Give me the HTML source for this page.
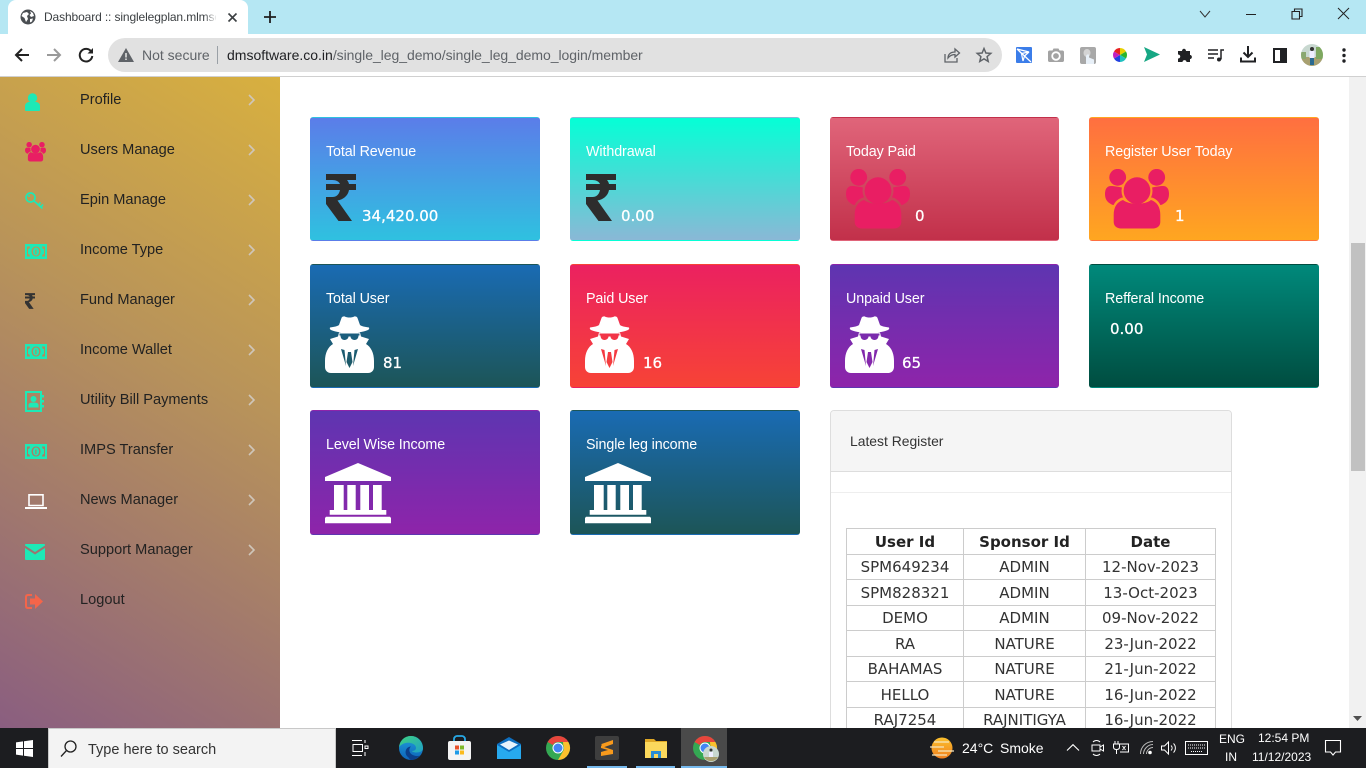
<!DOCTYPE html>
<html lang="en"><head><meta charset="utf-8"><title>Dashboard</title>
<style>
html,body{margin:0;padding:0;width:1366px;height:768px;overflow:hidden;background:#fff;font-family:"Liberation Sans",sans-serif}
.a{position:absolute;white-space:nowrap}
svg{position:absolute;overflow:visible}
.side{left:0;top:77px;width:280px;height:651px;background:linear-gradient(212deg,#d8b03f 0%,#b8935a 42%,#8a5e80 100%)}
.m{left:80px;font-size:14.6px;line-height:20px;color:#222}
.card{position:absolute;box-sizing:border-box;border:1px solid transparent;border-radius:3px;color:#fff}
.t{position:absolute;left:15px;top:24px;font-size:14.3px;line-height:20px;white-space:nowrap;letter-spacing:-.1px}
.n{position:absolute;font:15px/20px "DejaVu Sans",sans-serif;color:#fff;white-space:nowrap;-webkit-text-stroke:.3px #fff}
.g1{background:linear-gradient(#5b7de9,#2fc1e0)}.g2{background:linear-gradient(#05ffd6,#8ab8d6)}
.g3{background:linear-gradient(#e0657a,#c2304a)}.g4{background:linear-gradient(#ff6f40,#ffa620)}
.g5{background:linear-gradient(#1a6bb3,#1c5557)}.g6{background:linear-gradient(#eb2160,#f74336)}
.g7{background:linear-gradient(#5e35b1,#8e24aa)}.g8{background:linear-gradient(#00897b,#004d40)}
table{position:absolute;left:846px;top:528px;width:370px;border-collapse:collapse;table-layout:fixed;font:15px "DejaVu Sans",sans-serif;color:#333;text-align:center}
td,th{border:1px solid #ccc;padding:0;line-height:20px;overflow:hidden;white-space:nowrap}
th{font-size:15px;font-weight:bold;color:#222;padding:0}
tr.h{height:26px}tr.l{height:25px}
.tb{color:#fff;font-size:13px}
</style></head><body>
<svg width="0" height="0" style="position:absolute"><defs>
<symbol id="rup" viewBox="0 0 30 47"><path d="M0 0H30V6H21C22 7.200 22.700 8.500 23 10H30V16H23C22.500 19 21 21.500 18.500 23.500C16.500 25 14.500 26 11.500 26.500L26 47H12.500L0 30V23H6.500C10 23 13 21 14 16H0V10H14C13 7.500 10 6 6.500 6H0Z"/></symbol>
<symbol id="spy" viewBox="0 0 49 57"><path fill="#fff" d="M5 11.500C9 11 13 10 14 9L16.500 2C17 .5 19 0 20 .6C22 1.800 27 1.800 29 .6C30 0 32 .5 32.500 2L35 9C36 10 40 11 44 11.500C44.500 12.500 44 13.500 43 14C38 16 31 17 24.500 17C18 17 11 16 6 14C5 13.500 4.500 12.500 5 11.500Z"/><path fill="#fff" fill-rule="evenodd" d="M0 45C0 37 3 31 8 28L5 23L13 20.500L14 16.500H35L36 20.500L44 23L41 28C46 31 49 37 49 45V51C49 54 47 57 43 57H6C2 57 0 54 0 51ZM14.500 17.500H34.500V19.500H33.500C33.500 22 32 24 29.500 24C27 24 25.500 22 25.500 20.500H23.500C23.500 22 22 24 19.500 24C17 24 15.500 22 15.500 19.500H14.500ZM16 33L19.500 34L21 50ZM33 33L29.500 34L28 50ZM23 36H26L27.500 46L24.500 52L21.500 46Z"/></symbol>
<symbol id="usr" viewBox="0 0 64 61"><mask id="mk1"><rect x="-2" y="-2" width="68" height="66" fill="#fff"/><circle cx="32" cy="21.700" r="15.500" fill="#000"/><path d="M6.700 61V46C6.700 37 10 31 17 28.500H47C54 31 57.300 37 57.300 46V61Z" fill="#000"/></mask><g mask="url(#mk1)"><circle cx="12.700" cy="8.300" r="8.400"/><circle cx="51.700" cy="8.300" r="8.400"/><path d="M0 25C0 20 2 17 6 17C9 17 14 18 20 19V36H8C3 34 0 31 0 25ZM64 25C64 20 62 17 58 17C55 17 50 18 44 19V36H56C61 34 64 31 64 25Z"/></g><circle cx="32" cy="21.700" r="13.400"/><path d="M8.700 46C8.700 38 12 33 18 31C24 36 40 36 46 31C52 33 55.300 38 55.300 46V53C55.300 57 52 59.500 48 59.500H16C12 59.500 8.700 57 8.700 53Z"/></symbol>
<symbol id="bank" viewBox="0 0 66 61"><path fill="#fff" d="M33 0L66 14V18H0V14ZM9 22H18.700V47H9ZM22.300 22H30.700V47H22.300ZM35.300 22H44V47H35.300ZM48 22H56.700V47H48ZM4.700 47H61.300V51.700H4.700ZM1 53.700H65L66 55V60.300H0V55Z"/></symbol>
<symbol id="money" viewBox="0 0 22 15"><path fill-rule="evenodd" d="M0 0H22V15H0ZM2 2.500V12.500H5C5 11 4 10 3 10V5C4 5 5 4 5 2.500ZM20 2.500H17C17 4 18 5 19 5V10C18 10 17 11 17 12.500H20ZM11 2.500C8 2.500 6.500 5 6.500 7.500S8 12.500 11 12.500 15.500 10 15.500 7.500 14 2.500 11 2.500Z"/><path fill-rule="evenodd" d="M11 3.500C9 3.500 8 5.500 8 7.500S9 11.500 11 11.500 14 9.500 14 7.500 13 3.500 11 3.500ZM10.300 5.500H11.500V10H10.300Z"/></symbol>
</defs></svg>

<!-- Chrome title bar -->
<div class="a" style="left:0;top:0;width:1366px;height:34px;background:#b5e7f3"></div>
<div class="a" style="left:8px;top:0;width:240px;height:34px;background:#fff;border-radius:8px 8px 0 0"></div>
<svg style="left:20px;top:9px" width="16" height="16" viewBox="0 0 16 16"><circle cx="8" cy="8" r="7.500" fill="#4a4e52"/><path d="M3 4L7 3L9 5L7 7L8 10L6 13L4.500 9L1.500 7ZM10 2L13 4L14 7L11 8L9.500 6L11 4.500ZM10 10L13 9.500L12 12.500L10 13.500Z" fill="#fff"/></svg>
<div class="a" style="left:44px;top:10px;width:172px;overflow:hidden;font-size:12px;line-height:15px;color:#3c4043;letter-spacing:-.12px">Dashboard :: singlelegplan.mlmsoftware</div>
<div class="a" style="left:204px;top:8px;width:13px;height:18px;background:linear-gradient(90deg,rgba(255,255,255,0),#fff)"></div>
<svg style="left:228px;top:13px" width="9" height="9" fill="none" stroke="#3c4043" stroke-width="1.600"><path d="M.5 .5L8.500 8.500M8.500 .5L.5 8.500"/></svg>
<svg style="left:264px;top:11px" width="12" height="12" fill="none" stroke="#1f1f1f" stroke-width="1.800"><path d="M6 0V12M0 6H12"/></svg>
<svg style="left:1199px;top:10px" width="12" height="8" fill="none" stroke="#333" stroke-width="1"><path d="M1 1L6 7L11 1"/></svg>
<div class="a" style="left:1246px;top:14px;width:10px;height:1px;background:#222"></div>
<svg style="left:1291px;top:8px" width="12" height="12" fill="none" stroke="#222" stroke-width="1.100"><path d="M1 3.500H8.500V11H1ZM3.500 3.500V1H11V8.500H8.500"/></svg>
<svg style="left:1338px;top:8px" width="11" height="11" fill="none" stroke="#222" stroke-width="1"><path d="M0 0L11 11M11 0L0 11"/></svg>

<!-- Toolbar -->
<div class="a" style="left:0;top:34px;width:1366px;height:42px;background:#fff"></div>
<div class="a" style="left:0;top:76px;width:1366px;height:1px;background:#d0d0d0"></div>
<svg style="left:14px;top:47px" width="16" height="16" fill="none" stroke="#222" stroke-width="2"><path d="M15 8H2M8 2L2 8L8 14"/></svg>
<svg style="left:46px;top:47px" width="16" height="16" fill="none" stroke="#9a9a9a" stroke-width="2"><path d="M1 8H14M8 2L14 8L8 14"/></svg>
<svg style="left:78px;top:47px" width="16" height="16" fill="none" stroke="#222" stroke-width="2"><path d="M13.500 5A6.300 6.300 0 1 0 14.300 9"/><path d="M15 1V6.500H9.500Z" fill="#222" stroke="none"/></svg>
<div class="a" style="left:108px;top:38px;width:894px;height:34px;background:#e1e1e1;border-radius:17px"></div>
<svg style="left:118px;top:48px" width="16" height="14"><path d="M8 0L16 14H0ZM7.200 5V9.500H8.800V5ZM7.200 10.500V12H8.800V10.500Z" fill="#5f6368" fill-rule="evenodd"/></svg>
<div class="a" style="left:142px;top:47px;font-size:14px;line-height:17px;color:#5f6368">Not secure</div>
<div class="a" style="left:217px;top:46px;width:1px;height:18px;background:#9aa0a6"></div>
<div class="a" style="left:227px;top:47px;font-size:14px;line-height:17px;color:#5f6368"><span style="color:#202124">dmsoftware.co.in</span><span style="letter-spacing:-.05px">/single_leg_demo/single_leg_demo_login/member</span></div>
<svg style="left:944px;top:47px" width="16" height="16" fill="none" stroke="#5f6368" stroke-width="1.300"><path d="M1 7V15H13V11"/><path d="M4 11C4 7 7 5 11 5V2L15.500 6L11 10V7.500C8 7.500 6 8.500 4 11Z"/></svg>
<svg style="left:976px;top:47px" width="16" height="16" fill="none" stroke="#5f6368" stroke-width="1.500"><path d="M8 1.500L9.900 6L14.800 6.400L11.100 9.600L12.200 14.400L8 11.900L3.800 14.400L4.900 9.600L1.200 6.400L6.100 6Z"/></svg>
<!-- Extensions -->
<svg style="left:1016px;top:47px" width="16" height="16"><rect width="16" height="16" rx="1" fill="#3b7de9"/><path d="M1 2L15 15L8.500 9L7 14L5.500 6.500ZM1 2L13 5L5.500 6.500M8.500 9L13 5" fill="none" stroke="#fff" stroke-width="1.200"/></svg>
<svg style="left:1048px;top:48px" width="16" height="14"><path d="M1.500 2.500H4.500L5.500 .5H10.500L11.500 2.500H14.500C15.300 2.500 16 3.200 16 4V12.500C16 13.300 15.300 14 14.500 14H1.500C.7 14 0 13.300 0 12.500V4C0 3.200 .7 2.500 1.500 2.500Z" fill="#a3a3a3"/><circle cx="8" cy="8" r="3.800" fill="none" stroke="#fff" stroke-width="1.800"/></svg>
<svg style="left:1080px;top:47px" width="16" height="17"><rect width="16" height="17" rx="2" fill="#a8a8a8"/><ellipse cx="7" cy="6" rx="3.500" ry="4" fill="#d4d4d4"/><path d="M6 9V17H14V12.500L9 10.500V7.500H7Z" fill="#e8f0f8"/></svg>
<svg style="left:1113px;top:48px" width="14" height="14" viewBox="0 0 14 14"><path d="M7 7V0A7 7 0 0 1 13 3.500Z" fill="#e8d000"/><path d="M7 7L13 3.500A7 7 0 0 1 13 10.500Z" fill="#2ab52a"/><path d="M7 7L13 10.500A7 7 0 0 1 7 14Z" fill="#20c0c0"/><path d="M7 7V14A7 7 0 0 1 1 10.500Z" fill="#2040e0"/><path d="M7 7L1 10.500A7 7 0 0 1 1 3.500Z" fill="#c020c0"/><path d="M7 7L1 3.500A7 7 0 0 1 7 0Z" fill="#e82020"/></svg>
<svg style="left:1144px;top:47px" width="16" height="15"><path d="M0 0L16 7.500L0 15L3 7.500Z" fill="#17a784"/></svg>
<svg style="left:1177px;top:48px" width="15" height="15"><path d="M5 3C5 0 9 0 9 3H13V7C15.500 7 15.500 11 13 11V14H9.500C9.500 11.500 5.500 11.500 5.500 14H1V10.500C4 10.500 4 6.500 1 6.500V3Z" fill="#202124"/></svg>
<svg style="left:1208px;top:49px" width="16" height="13" fill="none" stroke="#202124" stroke-width="1.500"><path d="M0 1H10M0 5H10M0 9H6"/><path d="M13 10.500V1H16"/><circle cx="11" cy="10.500" r="2" fill="#202124" stroke="none"/></svg>
<svg style="left:1240px;top:46px" width="16" height="17" fill="none" stroke="#202124" stroke-width="2"><path d="M8 0V10M3.500 6.500L8 11L12.500 6.500M1 11.500V15.500H15V11.500"/></svg>
<div class="a" style="left:1273px;top:48px;width:5px;height:11px;border:2.500px solid #202124;border-right-width:7px;background:#fff;box-sizing:content-box"></div>
<svg style="left:1301px;top:44px" width="22" height="22"><defs><clipPath id="av"><circle cx="11" cy="11" r="11"/></clipPath></defs><g clip-path="url(#av)"><rect width="22" height="22" fill="#c8d8d0"/><rect y="13" width="22" height="9" fill="#a8a070"/><rect x="15" y="3" width="7" height="12" fill="#7ea860"/><rect x="0" y="8" width="5" height="7" fill="#8aa870"/><circle cx="11" cy="5" r="2" fill="#333"/><rect x="8.500" y="7" width="5" height="7" fill="#eef"/><rect x="9" y="14" width="4" height="7" fill="#2a6a90"/></g></svg>
<svg style="left:1342px;top:48px" width="4" height="15" fill="#202124"><circle cx="2" cy="2" r="1.700"/><circle cx="2" cy="7.500" r="1.700"/><circle cx="2" cy="13" r="1.700"/></svg>

<!-- Sidebar -->
<div class="a side"></div>
<svg style="left:25px;top:93px" width="15" height="18" fill="#1de9b6"><circle cx="7.500" cy="5" r="4.700"/><path d="M0 13C0 10 3 9 4 9H11C12 9 15 10 15 13V17C15 17.600 14.600 18 14 18H1C.4 18 0 17.600 0 17Z"/></svg>
<div class="a m" style="top:90px">Profile</div>
<svg style="left:25px;top:142px" width="21" height="20" fill="#e91e63"><use href="#usr" width="21" height="20"/></svg>
<div class="a m" style="top:140px">Users Manage</div>
<svg style="left:25px;top:192px" width="19" height="18" viewBox="0 0 19 18" fill="none" stroke="#1de9b6" stroke-width="1.700"><circle cx="5.500" cy="5.500" r="4.500"/><path d="M8.500 8.500L17.500 16.500M13.500 13L15.500 10.500M16 15L18 12.500"/><circle cx="4" cy="4" r="1" fill="#1de9b6" stroke="none"/></svg>
<div class="a m" style="top:190px">Epin Manage</div>
<svg style="left:25px;top:244px" width="22" height="15" fill="#1de9b6"><use href="#money" width="22" height="15"/></svg>
<div class="a m" style="top:240px">Income Type</div>
<svg style="left:25px;top:293px" width="10" height="16" fill="#333"><use href="#rup" width="10" height="16"/></svg>
<div class="a m" style="top:290px">Fund Manager</div>
<svg style="left:25px;top:344px" width="22" height="15" fill="#1de9b6"><use href="#money" width="22" height="15"/></svg>
<div class="a m" style="top:340px">Income Wallet</div>
<svg style="left:25px;top:391px" width="19" height="21" fill="#1de9b6"><path fill-rule="evenodd" d="M0 0H17V4H19V6.500H17V9H19V11.500H17V14H19V16.500H17V21H0ZM2 2V19H15V2Z"/><circle cx="8.500" cy="8" r="3"/><path d="M3.500 16.500V14C3.500 12 6 11.500 8.500 11.500S13.500 12 13.500 14V16.500Z"/></svg>
<div class="a m" style="top:390px">Utility Bill Payments</div>
<svg style="left:25px;top:444px" width="22" height="15" fill="#1de9b6"><use href="#money" width="22" height="15"/></svg>
<div class="a m" style="top:440px">IMPS Transfer</div>
<svg style="left:25px;top:494px" width="22" height="15"><path fill="none" stroke="#fff" stroke-width="1.600" d="M4 .8H18V11.500H4Z"/><rect y="13" width="22" height="2" fill="#fff"/></svg>
<div class="a m" style="top:490px">News Manager</div>
<svg style="left:25px;top:544px" width="20" height="16" fill="#1de9b6"><path d="M0 1C0 .4 .4 0 1 0H19C19.600 0 20 .4 20 1V1.500L10 8L0 1.500ZM0 4L10 10.500L20 4V15C20 15.600 19.600 16 19 16H1C.4 16 0 15.600 0 15Z"/></svg>
<div class="a m" style="top:540px">Support Manager</div>
<svg style="left:25px;top:594px" width="18" height="15"><path fill="#f4654a" d="M5 4.500H10V0L18 7.500L10 15V10.500H5Z"/><path fill="none" stroke="#f4654a" stroke-width="2" d="M7 1H3C1.500 1 1 2 1 3V12C1 13 1.500 14 3 14H7"/></svg>
<div class="a m" style="top:590px">Logout</div>
<svg style="left:248px;top:94px" width="7" height="513" fill="none" stroke="#cfc6ba" stroke-width="1.600"><path d="M1 1L6 6L1 11M1 51L6 56L1 61M1 101L6 106L1 111M1 151L6 156L1 161M1 201L6 206L1 211M1 251L6 256L1 261M1 301L6 306L1 311M1 351L6 356L1 361M1 401L6 406L1 411M1 451L6 456L1 461"/></svg>

<!-- Row 1 -->
<div class="card g1" style="left:310px;top:117px;width:230px;height:124px"><div class="t">Total Revenue</div><svg style="left:15px;top:56px" width="30" height="47" fill="#2d2d2d"><use href="#rup" width="30" height="47"/></svg><div class="n" style="left:51px;top:88px">34,420.00</div></div>
<div class="card g2" style="left:570px;top:117px;width:230px;height:124px"><div class="t">Withdrawal</div><svg style="left:15px;top:56px" width="30" height="47" fill="#2d2d2d"><use href="#rup" width="30" height="47"/></svg><div class="n" style="left:50px;top:88px">0.00</div></div>
<div class="card g3" style="left:830px;top:117px;width:229px;height:124px"><div class="t">Today Paid</div><svg style="left:15px;top:51px" width="64" height="61" fill="#e91e63"><use href="#usr" width="64" height="61"/></svg><div class="n" style="left:84px;top:88px">0</div></div>
<div class="card g4" style="left:1089px;top:117px;width:230px;height:124px"><div class="t">Register User Today</div><svg style="left:15px;top:51px" width="64" height="61" fill="#e91e63"><use href="#usr" width="64" height="61"/></svg><div class="n" style="left:85px;top:88px">1</div></div>
<!-- Row 2 -->
<div class="card g5" style="left:310px;top:264px;width:230px;height:124px"><div class="t">Total User</div><svg style="left:14px;top:51px" width="49" height="57"><use href="#spy" width="49" height="57"/></svg><div class="n" style="left:72px;top:88px">81</div></div>
<div class="card g6" style="left:570px;top:264px;width:230px;height:124px"><div class="t">Paid User</div><svg style="left:14px;top:51px" width="49" height="57"><use href="#spy" width="49" height="57"/></svg><div class="n" style="left:72px;top:88px">16</div></div>
<div class="card g7" style="left:830px;top:264px;width:229px;height:124px"><div class="t">Unpaid User</div><svg style="left:14px;top:51px" width="49" height="57"><use href="#spy" width="49" height="57"/></svg><div class="n" style="left:71px;top:88px">65</div></div>
<div class="card g8" style="left:1089px;top:264px;width:230px;height:124px"><div class="t">Refferal Income</div><div class="n" style="left:20px;top:54px">0.00</div></div>
<!-- Row 3 -->
<div class="card g7" style="left:310px;top:410px;width:230px;height:125px"><div class="t">Level Wise Income</div><svg style="left:14px;top:52px" width="66" height="61"><use href="#bank" width="66" height="61"/></svg></div>
<div class="card g5" style="left:570px;top:410px;width:230px;height:125px"><div class="t">Single leg income</div><svg style="left:14px;top:52px" width="66" height="61"><use href="#bank" width="66" height="61"/></svg></div>

<!-- Latest Register panel -->
<div class="a" style="left:830px;top:410px;width:402px;height:330px;box-sizing:border-box;border:1px solid #ddd;border-radius:4px 4px 0 0;background:#fff"></div>
<div class="a" style="left:831px;top:411px;width:400px;height:60px;background:#f5f5f5;border-bottom:1px solid #ddd;border-radius:3px 3px 0 0"></div>
<div class="a" style="left:850px;top:432px;font-size:13.9px;line-height:18px;color:#333">Latest Register</div>
<div class="a" style="left:831px;top:492px;width:400px;height:1px;background:#eee"></div>
<table style="width:369px"><colgroup><col style="width:117px"><col style="width:122px"><col style="width:130px"></colgroup>
<tr class="h"><th>User Id</th><th>Sponsor Id</th><th>Date</th></tr>
<tr class="l"><td>SPM649234</td><td>ADMIN</td><td>12-Nov-2023</td></tr>
<tr class="h"><td>SPM828321</td><td>ADMIN</td><td>13-Oct-2023</td></tr>
<tr class="l"><td>DEMO</td><td>ADMIN</td><td>09-Nov-2022</td></tr>
<tr class="h"><td>RA</td><td>NATURE</td><td>23-Jun-2022</td></tr>
<tr class="l"><td>BAHAMAS</td><td>NATURE</td><td>21-Jun-2022</td></tr>
<tr class="h"><td>HELLO</td><td>NATURE</td><td>16-Jun-2022</td></tr>
<tr class="l"><td>RAJ7254</td><td>RAJNITIGYA</td><td>16-Jun-2022</td></tr>
</table>

<!-- Scrollbar -->
<div class="a" style="left:1349px;top:77px;width:17px;height:651px;background:#f1f1f1"></div>
<div class="a" style="left:1351px;top:243px;width:14px;height:228px;background:#c1c1c1"></div>
<svg style="left:1353px;top:716px" width="9" height="5"><path d="M0 0H9L4.500 5Z" fill="#505050"/></svg>

<!-- Taskbar -->
<div class="a" style="left:0;top:728px;width:1366px;height:40px;background:#1c1d20"></div>
<svg style="left:16px;top:740px" width="17" height="17" fill="#fff"><path d="M0 2.400L7 1.400V8H0ZM8 1.300L17 0V8H8ZM0 9H7V15.600L0 14.600ZM8 9H17V17L8 15.700Z"/></svg>
<div class="a" style="left:48px;top:728px;width:288px;height:40px;background:#f3f3f3;box-sizing:border-box;border:1px solid #c8c8c8;border-bottom:0"></div>
<svg style="left:60px;top:740px" width="17" height="17" fill="none" stroke="#222" stroke-width="1.300"><circle cx="10.500" cy="6.500" r="5.500"/><path d="M6.500 10.500L1 16.500"/></svg>
<div class="a" style="left:88px;top:741px;font-size:14.5px;line-height:18px;color:#333">Type here to search</div>
<svg style="left:352px;top:740px" width="17" height="16" fill="none" stroke="#fff" stroke-width="1"><path d="M0 .5H10M0 15.500H10M1 4.500H10.500V11.500H1ZM13 0V3M13 6H16V8.500H13ZM13 12V16"/></svg>
<svg style="left:399px;top:736px" width="24" height="24" viewBox="0 0 24 24"><defs><linearGradient id="e1" x1="0" y1="0" x2="1" y2="1"><stop offset="0" stop-color="#3fd27f"/><stop offset="1" stop-color="#1fa0c8"/></linearGradient><linearGradient id="e2" x1="0" y1="0" x2="0" y2="1"><stop offset="0" stop-color="#1f9fdc"/><stop offset="1" stop-color="#0e63b8"/></linearGradient></defs><circle cx="12" cy="12" r="12" fill="url(#e2)"/><path d="M0 11C1 4 6 0 12 0C19 0 24 6 24 12.500C24 15 21 16.500 17.500 16.500C15 16.500 13 15.500 13 15C16 15 18 13 16.500 10C14 6 5 5 0 11Z" fill="url(#e1)"/><path d="M9 21C5 18 6 11 12 10.500C9 13 10 18 15 19.500C18 20.500 20 20 21 19.500C19 22 15 24 12 24C11 24 10 22 9 21Z" fill="#0b3f8a"/></svg>
<svg style="left:448px;top:736px" width="23" height="24" viewBox="0 0 23 24"><path d="M6 6V3C6 1 8 0 9 0H14C15 0 17 1 17 3V6" fill="none" stroke="#27a9e6" stroke-width="1.800"/><rect y="5" width="23" height="19" rx="2" fill="#f4f4f4"/><rect x="7" y="9.500" width="4" height="4" fill="#e8502a"/><rect x="12" y="9.500" width="4" height="4" fill="#7fba2a"/><rect x="7" y="14.500" width="4" height="4" fill="#1d9be8"/><rect x="12" y="14.500" width="4" height="4" fill="#fbbb1d"/></svg>
<svg style="left:497px;top:737px" width="24" height="22" viewBox="0 0 24 22"><path d="M12 0L24 7V22H0V7Z" fill="#0e6fc0"/><path d="M0 8L12 15L24 8V22H0Z" fill="#27a9ee"/><path d="M3 7.500L12 3.500L21 7.500L12 13Z" fill="#e8f4fc"/></svg>
<svg style="left:546px;top:736px" width="24" height="24" viewBox="0 0 24 24"><circle cx="12" cy="12" r="12" fill="#34a853"/><path d="M12 0A12 12 0 0 1 22.400 6H12A6 6 0 0 0 6.800 9L1.600 6A12 12 0 0 1 12 0Z" fill="#e8453c"/><path d="M22.400 6A12 12 0 0 1 12 24L17.200 15A6 6 0 0 0 17.200 9L17 6Z" fill="#fbc02d"/><circle cx="12" cy="12" r="5.500" fill="#fff"/><circle cx="12" cy="12" r="4.500" fill="#4285f4"/></svg>
<svg style="left:595px;top:736px" width="24" height="24" viewBox="0 0 24 24"><rect width="24" height="24" rx="2" fill="#3e3e3e"/><path d="M18 4V8L6.500 12V8ZM6 10L18 14V18L6 20V16L13 14L6 12Z" fill="#f89a1c"/></svg>
<svg style="left:645px;top:738px" width="22" height="21" viewBox="0 0 22 21"><path d="M0 1H9L11 3H22V20H0Z" fill="#e0a825"/><rect y="4" width="22" height="16" fill="#fbd85c"/><path d="M6 20V13H16V20H13V16H9V20Z" fill="#2a8dd4"/></svg>
<div class="a" style="left:681px;top:728px;width:46px;height:40px;background:#4a4a4a"></div>
<svg style="left:693px;top:736px" width="24" height="24" viewBox="0 0 24 24"><circle cx="12" cy="12" r="12" fill="#34a853"/><path d="M12 0A12 12 0 0 1 22.400 6H12A6 6 0 0 0 6.800 9L1.600 6A12 12 0 0 1 12 0Z" fill="#e8453c"/><path d="M22.400 6A12 12 0 0 1 12 24L17.200 15A6 6 0 0 0 17.200 9L17 6Z" fill="#fbc02d"/><circle cx="12" cy="12" r="5.500" fill="#fff"/><circle cx="12" cy="12" r="4.500" fill="#4285f4"/></svg>
<svg style="left:703px;top:746px" width="16" height="16"><circle cx="8" cy="8" r="8" fill="#c8d8d0"/><path d="M1 11H15A8 8 0 0 1 1 11Z" fill="#a8a070"/><circle cx="8" cy="4" r="1.500" fill="#333"/><rect x="6" y="6" width="4" height="5" fill="#eef"/></svg>
<div class="a" style="left:587px;top:766px;width:40px;height:2px;background:#76b9ed"></div>
<div class="a" style="left:636px;top:766px;width:39px;height:2px;background:#76b9ed"></div>
<div class="a" style="left:681px;top:766px;width:46px;height:2px;background:#76b9ed"></div>
<!-- Tray -->
<svg style="left:930px;top:737px" width="24" height="22" viewBox="0 0 24 22"><defs><linearGradient id="sun" x1="0" y1="0" x2="0" y2="1"><stop offset="0" stop-color="#fbc02d"/><stop offset="1" stop-color="#f08020"/></linearGradient></defs><circle cx="12" cy="11" r="10.500" fill="url(#sun)"/><path d="M4 5H19M0 10H14M8 14H24M2 18H17" stroke="#f4e6c0" stroke-width="1.200"/></svg>
<div class="a tb" style="left:962px;top:740px;font-size:14px;line-height:17px">24°C</div>
<div class="a tb" style="left:1000px;top:740px;font-size:14px;line-height:17px">Smoke</div>
<svg style="left:1067px;top:744px" width="12" height="7" fill="none" stroke="#fff" stroke-width="1.100"><path d="M0 6.500L6 .7L12 6.500"/></svg>
<svg style="left:1091px;top:739px" width="13" height="18" fill="none" stroke="#fff" stroke-width="1"><path d="M1 6H9V12H1ZM9 8L12.500 6V12L9 10M2 3C4 1 7 1 9 3M2 15C4 17 7 17 9 15"/></svg>
<svg style="left:1113px;top:741px" width="16" height="14" fill="none" stroke="#fff" stroke-width="1"><path d="M2 0V3M5 0V3M.5 3H6.500V6C6.500 8 5 8.500 3.500 8.500S.5 8 .5 6ZM3.500 8.500V13M7 3H15.500V11H7M9.500 5L12.500 9M12.500 5L9.500 9"/></svg>
<svg style="left:1140px;top:741px" width="13" height="14" fill="none" stroke="#bbb" stroke-width="1"><path d="M.5 13C.5 6 6 .5 13 .5M3.500 13C3.500 8 8 3.500 13 3.500M6.500 13C6.500 9.500 9.500 6.500 13 6.500"/><circle cx="10" cy="11.500" r="1.800" fill="#fff" stroke="none"/></svg>
<svg style="left:1161px;top:741px" width="16" height="14" fill="none" stroke="#fff" stroke-width="1"><path d="M.5 5H3.500L7.500 1V13L3.500 9H.5ZM10 4.500C11.500 6 11.500 8 10 9.500M12.500 2.500C15 5 15 9 12.500 11.500"/></svg>
<svg style="left:1185px;top:741px" width="23" height="14" fill="none" stroke="#fff" stroke-width="1"><rect x=".5" y=".5" width="22" height="13"/><path d="M3 4H20M3 7H20M6 10.500H17" stroke-dasharray="1 1"/></svg>
<div class="a tb" style="left:1219px;top:732px;font-size:12px;line-height:15px">ENG</div>
<div class="a tb" style="left:1225px;top:750px;font-size:12px;line-height:15px">IN</div>
<div class="a tb" style="left:1258px;top:731px;font-size:12px;line-height:15px">12:54 PM</div>
<div class="a tb" style="left:1252px;top:750px;font-size:12px;line-height:15px">11/12/2023</div>
<svg style="left:1325px;top:740px" width="16" height="16" fill="none" stroke="#fff" stroke-width="1.100"><path d="M.5 .5H15.500V12H10.500L8 15L5.500 12H.5Z"/></svg>
</body></html>
